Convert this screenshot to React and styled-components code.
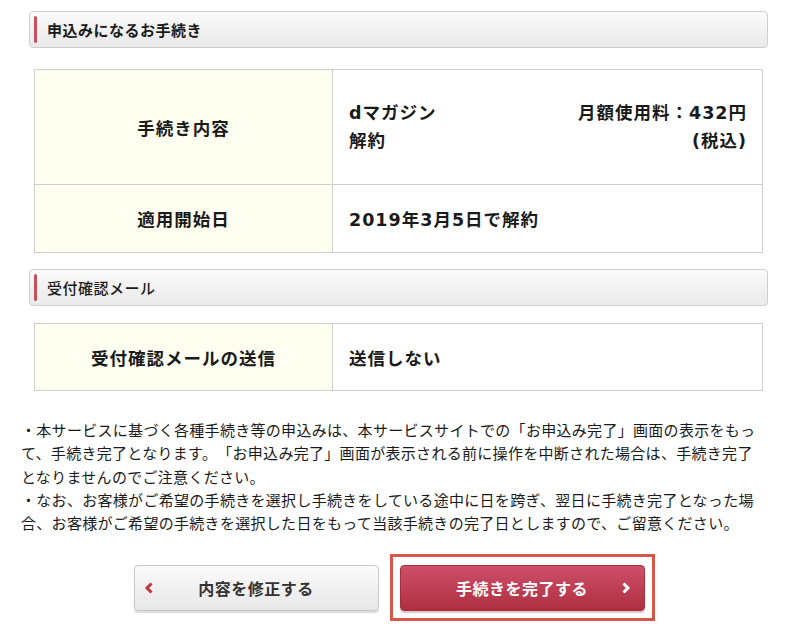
import React from "react";
import styled, { createGlobalStyle } from "styled-components";

const Global = createGlobalStyle`
  html, body { margin: 0; padding: 0; background: #fff; }
  body {
    font-family: "Noto Sans CJK JP", "Noto Sans", sans-serif;
    color: #1a1a1a;
    text-spacing-trim: space-all;
  }
`;

const Page = styled.div`
  width: 798px;
  padding: 11px 0 0 0;
  box-sizing: border-box;
`;

const Section = styled.div`
  width: 739px;
  margin-left: 29px;
  display: flex;
  flex-direction: column;
`;

const SectionHeader = styled.div`
  height: 37px;
  margin-top: ${(p) => p.$top || 0}px;
  box-sizing: border-box;
  border: 1px solid #cfcfcf;
  border-radius: 4px;
  background: linear-gradient(#fbfbfb, #e9e9e9);
  display: flex;
  align-items: center;
  padding-left: 4px;
  gap: 10px;
  font-size: 15px;
  letter-spacing: 0.5px;
  font-weight: ${(p) => p.$weight || 700};
  color: #1a1a1a;
`;

const Accent = styled.span`
  width: 3px;
  height: 27px;
  border-radius: 2px;
  background: #c94f5b;
`;

const Table = styled.table`
  width: 729px;
  margin: ${(p) => p.$top}px 0 0 5px;
  border-collapse: collapse;
  font-family: "DejaVu Sans", "Noto Sans CJK JP", sans-serif;
  font-size: 17.5px;
  letter-spacing: 1px;
  font-weight: 700;
  color: #1a1a1a;
`;

const Label = styled.th`
  width: 298px;
  box-sizing: border-box;
  background: #fffff1;
  border: 1px solid #cfcfcf;
  text-align: center;
  font-weight: 700;
  height: ${(p) => p.$h}px;
  padding: 0;
`;

const Value = styled.td`
  border: 1px solid #cfcfcf;
  padding: 0 15px 0 16px;
  vertical-align: middle;
  height: ${(p) => p.$h}px;
`;

const Split = styled.div`
  display: flex;
  justify-content: space-between;
  line-height: 28px;
`;

const Right = styled.div`
  text-align: right;
`;

const Notes = styled.p`
  margin: 27px 0 0 21px;
  width: 745px;
  font-size: 15px;
  letter-spacing: 0.3px;
  line-height: 23.25px;
  color: #1a1a1a;
`;

const Buttons = styled.div`
  display: flex;
  justify-content: center;
  align-items: center;
  gap: 11px;
  margin-top: 20px;
  padding-right: 10px;
`;

const Focus = styled.div`
  border: 3px solid #d8574b;
  padding: 8px 7px 7px 7px;
  display: flex;
`;

const Button = styled.button`
  position: relative;
  width: 245px;
  height: 46px;
  border-radius: 4px;
  font-family: "Noto Sans CJK JP", sans-serif;
  font-size: 16px;
  letter-spacing: 0.5px;
  font-weight: 700;
  display: flex;
  align-items: center;
  justify-content: center;
  cursor: pointer;
  border: 1px solid ${(p) => (p.$primary ? "#a3303e" : "#c9c9c9")};
  color: ${(p) => (p.$primary ? "#fff" : "#333")};
  background: ${(p) =>
    p.$primary
      ? "linear-gradient(#cd4f6a, #af2f40)"
      : "linear-gradient(#fbfbfb, #e7e7e7)"};
  box-shadow: 0 2px 1px ${(p) => (p.$primary ? "#dcc6c8" : "#dcdcdc")};
`;

const Chevron = styled.span`
  position: absolute;
  top: 50%;
  transform: translateY(-50%);
  ${(p) => (p.$side === "left" ? "left: 9px;" : "right: 13px;")}
  display: flex;
`;

const ChevronIcon = ({ dir, color }) => (
  <svg width="10" height="12" viewBox="0 0 10 12">
    {dir === "left" ? (
      <path d="M7.5 1.5 L3 6 L7.5 10.5" fill="none" stroke={color} strokeWidth="3" />
    ) : (
      <path d="M2.5 1.5 L7 6 L2.5 10.5" fill="none" stroke={color} strokeWidth="3" />
    )}
  </svg>
);

export default function App() {
  return (
    <Page>
      <Global />
      <Section>
        <SectionHeader>
          <Accent />
          申込みになるお手続き
        </SectionHeader>
        <Table $top={21}>
          <tbody>
            <tr>
              <Label $h={114}>手続き内容</Label>
              <Value $h={114}>
                <Split>
                  <div>
                    dマガジン
                    <br />
                    解約
                  </div>
                  <Right>
                    月額使用料：432円
                    <br />
                    (税込)
                  </Right>
                </Split>
              </Value>
            </tr>
            <tr>
              <Label $h={67}>適用開始日</Label>
              <Value $h={67}>2019年3月5日で解約</Value>
            </tr>
          </tbody>
        </Table>
        <SectionHeader $weight={500} $top={16}>
          <Accent />
          受付確認メール
        </SectionHeader>
        <Table $top={17}>
          <tbody>
            <tr>
              <Label $h={66}>受付確認メールの送信</Label>
              <Value $h={66}>送信しない</Value>
            </tr>
          </tbody>
        </Table>
      </Section>
      <Notes>
        ・本サービスに基づく各種手続き等の申込みは、本サービスサイトでの「お申込み完了」画面の表示をもって、手続き完了となります。「お申込み完了」画面が表示される前に操作を中断された場合は、手続き完了となりませんのでご注意ください。
        <br />
        ・なお、お客様がご希望の手続きを選択し手続きをしている途中に日を跨ぎ、翌日に手続き完了となった場合、お客様がご希望の手続きを選択した日をもって当該手続きの完了日としますので、ご留意ください。
      </Notes>
      <Buttons>
        <Button>
          <Chevron $side="left">
            <ChevronIcon dir="left" color="#c0343f" />
          </Chevron>
          内容を修正する
        </Button>
        <Focus>
          <Button $primary>
            手続きを完了する
            <Chevron $side="right">
              <ChevronIcon dir="right" color="#fff" />
            </Chevron>
          </Button>
        </Focus>
      </Buttons>
    </Page>
  );
}
